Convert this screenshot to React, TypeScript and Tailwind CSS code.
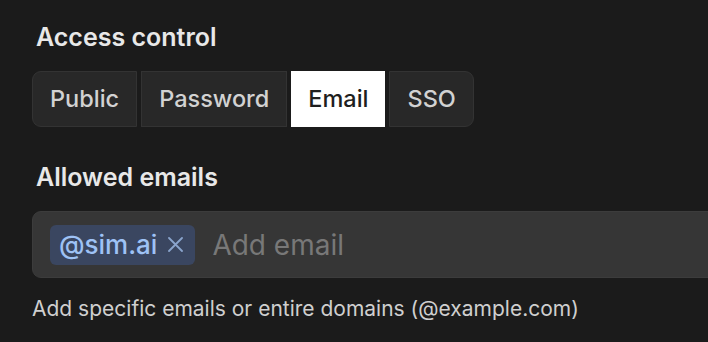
const modes = ['Public', 'Password', 'Email', 'SSO'];

export default function App() {
  const active = 'Email';
  return (
    <div className="h-[342px] w-[708px] overflow-hidden bg-[#1b1b1b] pl-[32px] pt-[22px]" style={{ fontFamily: 'Inter, "Noto Sans", sans-serif' }}>
      <div className="pl-[4px] text-[25px] font-semibold leading-[30px] text-[#e8e8e8]">Access control</div>
      <div className="mt-[19px] flex gap-[4px]">
        {modes.map((m, i) => (
          <button
            key={m}
            className={`h-[56px] px-[17px] text-[23.5px] font-medium
              ${m === active ? 'bg-white text-[#1e1e1e]' : 'border border-[#333333] bg-[#282828] text-[#d2d2d2]'}
              ${i === 0 ? 'rounded-l-[9px]' : ''} ${i === modes.length - 1 ? 'rounded-r-[9px]' : ''}`}
          >
            {m}
          </button>
        ))}
      </div>
      <div className="mt-[35px] pl-[4px] text-[25px] font-semibold leading-[30px] text-[#e8e8e8]">Allowed emails</div>
      <div className="mt-[19px] flex h-[67px] w-[720px] items-center gap-[17px] rounded-l-[9px] border border-[#3c3c3c] bg-[#363636] pl-[17px]">
        <span className="flex h-[40px] items-center gap-[11px] rounded-[6px] bg-[#3a4660] pl-[9px] pr-[12px] text-[26px] font-medium text-[#9ec2f5]">
          @sim.ai
          <svg width="15" height="15" viewBox="0 0 15 15" className="text-[#8aa4cc]">
            <path d="M1 1L14 14M14 1L1 14" stroke="currentColor" strokeWidth="1.8" strokeLinecap="round" />
          </svg>
        </span>
        <span className="text-[28px] text-[#787878]">Add email</span>
      </div>
      <div className="mt-[17px] text-[21px] leading-[28px] text-[#cfcfcf]">Add specific emails or entire domains (@example.com)</div>
    </div>
  );
}
